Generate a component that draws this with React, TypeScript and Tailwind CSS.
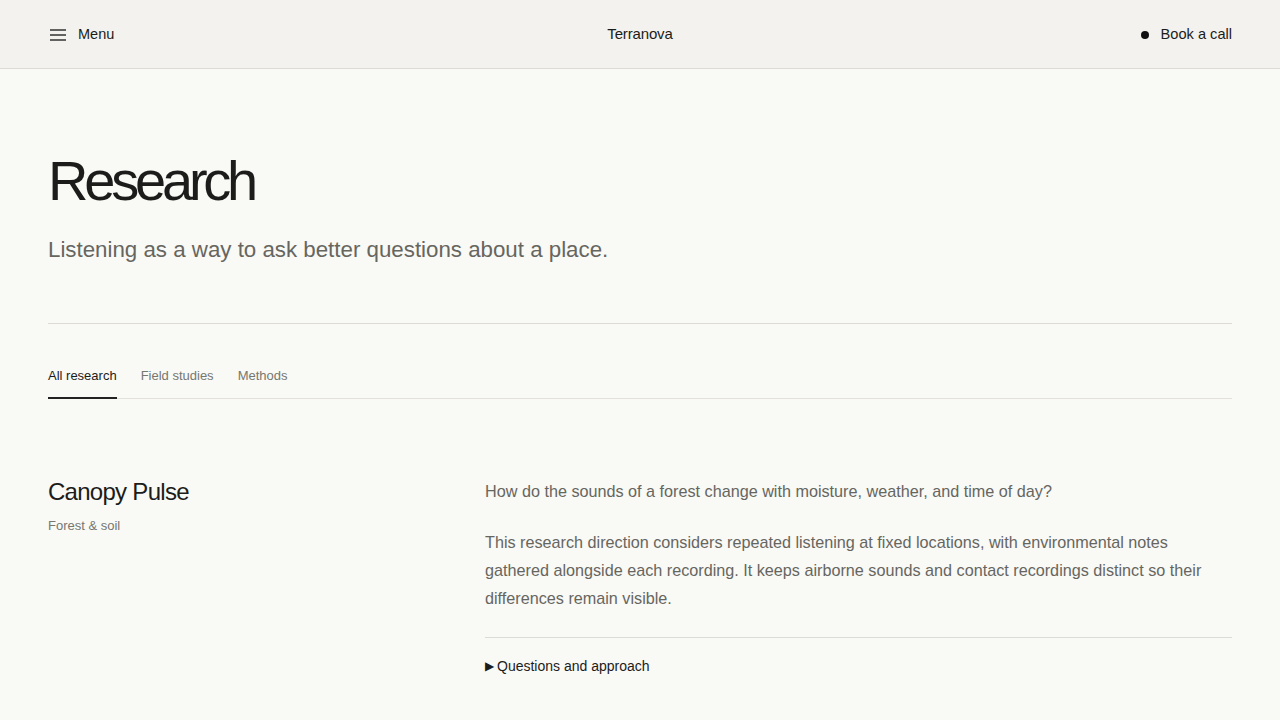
const TABS = ["All research", "Field studies", "Methods"];

function MenuIcon() {
  return (
    <svg width="16" height="12" viewBox="0 0 16 12" fill="none" stroke="#333" strokeWidth="1.7">
      <path d="M0 1h16M0 6h16M0 11h16" />
    </svg>
  );
}

export default function App() {
  return (
    <div
      className="min-h-screen bg-[#f9f9f6] text-[#1c1c1a]"
      style={{ fontFamily: '"Liberation Sans", Arial, sans-serif' }}
    >
      <header className="grid h-[69px] grid-cols-3 items-center border-b border-[#dcdbd6] bg-[#f3f2ee] px-12">
        <button className="flex items-center gap-3 justify-self-start pl-[2px] pt-[2px] text-[14.5px]">
          <MenuIcon />
          Menu
        </button>
        <div className="justify-self-center text-[15px] tracking-[-0.01em]">Terranova</div>
        <button className="flex items-center gap-[12px] justify-self-end pt-[2px] text-[14.6px]">
          <span className="h-[8px] w-[8px] rounded-full bg-[#111]" />
          Book a call
        </button>
      </header>

      <main className="px-12">
        <section className="pb-[58px] pt-[82px]">
          <h1 className="text-[56px] leading-[60px] tracking-[-0.075em]">Research</h1>
          <p className="mt-[24px] text-[22.3px] leading-[30px] text-[#66665f]">
            Listening as a way to ask better questions about a place.
          </p>
        </section>

        <div className="border-t border-[#dcdbd6]" />

        <nav className="mt-[42px] flex gap-6 border-b border-[#e2e1dc] text-[13px]">
          {TABS.map((t, i) => (
            <button
              key={t}
              className={
                i === 0
                  ? "-mb-px border-b-2 border-[#222] pb-[11px] text-[#1c1c1a]"
                  : "-mb-px border-b-2 border-transparent pb-[11px] text-[#77776f]"
              }
            >
              {t}
            </button>
          ))}
        </nav>

        <section className="mt-[78px] flex">
          <div className="w-[437px] shrink-0">
            <h2 className="text-[24px] leading-[30px] tracking-[-0.03em]">Canopy Pulse</h2>
            <p className="mt-[9px] text-[13px] text-[#77776f]">Forest &amp; soil</p>
          </div>
          <div className="flex-1 text-[16.2px] text-[#66665f]">
            <p className="leading-[28px]">
              How do the sounds of a forest change with moisture, weather, and time of day?
            </p>
            <p className="mt-[23px] leading-[28px]">
              This research direction considers repeated listening at fixed locations, with environmental notes
              gathered alongside each recording. It keeps airborne sounds and contact recordings distinct so their
              differences remain visible.
            </p>
            <div className="mt-[25px] border-t border-[#dcdbd6] pt-[18px]">
              <button className="flex items-center gap-[3px] text-[14px] text-[#1c1c1a]">
                <span className="text-[12px] leading-none">▶</span>
                Questions and approach
              </button>
            </div>
          </div>
        </section>
      </main>
    </div>
  );
}
